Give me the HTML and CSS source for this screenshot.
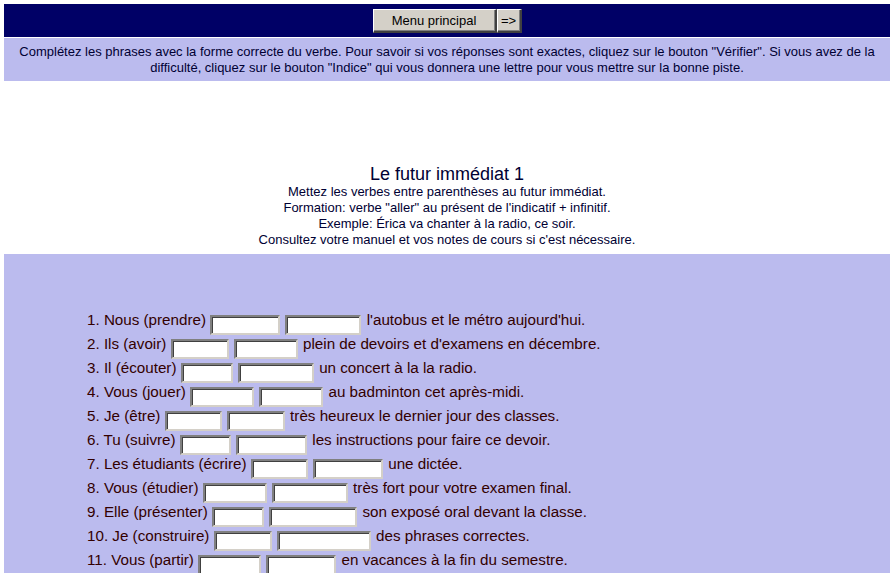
FILE: index.html
```html
<!DOCTYPE html>
<html lang="fr">
<head>
<meta charset="utf-8">
<title>Le futur immédiat 1</title>
<link rel="stylesheet" href="styles.css">
</head>
<body>
<div class="navbar">
  <button class="navbtn menu" type="button">Menu principal</button><button class="navbtn next" type="button">=&gt;</button>
</div>
<div class="instructions">Complétez les phrases avec la forme correcte du verbe. Pour savoir si vos réponses sont exactes, cliquez sur le bouton "Vérifier". Si vous avez de la difficulté, cliquez sur le bouton "Indice" qui vous donnera une lettre pour vous mettre sur la bonne piste.</div>
<div class="header">
  <h2 class="title">Le futur immédiat 1</h2>
  <p class="subtitle">Mettez les verbes entre parenthèses au futur immédiat.<br>Formation: verbe "aller" au présent de l'indicatif + infinitif.<br>Exemple: Érica va chanter à la radio, ce soir.<br>Consultez votre manuel et vos notes de cours si c'est nécessaire.</p>
</div>
<div class="exercise">
  <div class="lines">
    <div class="line">1. Nous (prendre) <input class="gap" style="width:70px"> <input class="gap" style="width:76px"> l'autobus et le métro aujourd'hui.</div>
    <div class="line">2. Ils (avoir) <input class="gap" style="width:58px"> <input class="gap" style="width:64px"> plein de devoirs et d'examens en décembre.</div>
    <div class="line">3. Il (écouter) <input class="gap" style="width:52px"> <input class="gap" style="width:76px"> un concert à la la radio.</div>
    <div class="line">4. Vous (jouer) <input class="gap" style="width:64px"> <input class="gap" style="width:64px"> au badminton cet après-midi.</div>
    <div class="line">5. Je (être) <input class="gap" style="width:57px"> <input class="gap" style="width:58px"> très heureux le dernier jour des classes.</div>
    <div class="line">6. Tu (suivre) <input class="gap" style="width:51px"> <input class="gap" style="width:71px"> les instructions pour faire ce devoir.</div>
    <div class="line">7. Les étudiants (écrire) <input class="gap" style="width:57px"> <input class="gap" style="width:70px"> une dictée.</div>
    <div class="line">8. Vous (étudier) <input class="gap" style="width:64px"> <input class="gap" style="width:76px"> très fort pour votre examen final.</div>
    <div class="line">9. Elle (présenter) <input class="gap" style="width:52px"> <input class="gap" style="width:88px"> son exposé oral devant la classe.</div>
    <div class="line">10. Je (construire) <input class="gap" style="width:58px"> <input class="gap" style="width:94px"> des phrases correctes.</div>
    <div class="line">11. Vous (partir) <input class="gap" style="width:63px"> <input class="gap" style="width:70px"> en vacances à la fin du semestre.</div>
    <div class="line">12. Mes amis et moi (regarder) <input class="gap" style="width:52px"> <input class="gap" style="width:88px"> un film ce soir.</div>
  </div>
</div>
</body>
</html>
```

FILE: styles.css
```css
html, body {
  background: #ffffff;
}
body {
  margin: 4px 5px 4px 4px;
  font-family: "Liberation Sans", Arial, sans-serif;
  color: #000033;
}
.navbar {
  background: #000066;
  height: 33px;
  display: flex;
  justify-content: center;
  align-items: center;
  margin-bottom: 1px;
}
.navbtn {
  font-family: "Liberation Sans", Arial, sans-serif;
  font-size: 13px;
  color: #000000;
  background: #d4d0c8;
  height: 24px;
  margin: 0;
  padding: 0;
  border-style: solid;
  border-width: 1px 2px 2px 1px;
  border-color: #ffffff #404040 #404040 #ffffff;
  box-shadow: inset -1px -1px 0 #808080;
}
.navbtn.menu {
  width: 124px;
}
.navbtn.next {
  width: 25px;
}
.instructions {
  background: #bbbbee;
  font-size: 13px;
  line-height: 16px;
  text-align: center;
  padding: 6px 14px 5px;
  color: #000033;
}
.header {
  padding: 83px 0 0;
  height: 90px;
  text-align: center;
}
.title {
  margin: 0;
  font-size: 18px;
  font-weight: normal;
  line-height: 20px;
  color: #000033;
}
.subtitle {
  margin: 0;
  font-size: 13px;
  line-height: 16px;
  color: #000033;
}
.exercise {
  background: #bbbbee;
  padding: 54px 0 20px 83px;
  color: #330000;
}
.line {
  font-size: 15.2px;
  line-height: 24px;
  height: 24px;
  white-space: nowrap;
}
.gap {
  box-sizing: border-box;
  height: 20px;
  margin: 0 1px 0 0;
  padding: 0 2px;
  background: #ffffff;
  border-style: solid;
  border-width: 2px;
  border-color: #808080 #d4d0c8 #d4d0c8 #808080;
  box-shadow: inset 1px 1px 0 #404040;
  vertical-align: -4px;
  font-family: "Liberation Sans", Arial, sans-serif;
  font-size: 13px;
}
```
